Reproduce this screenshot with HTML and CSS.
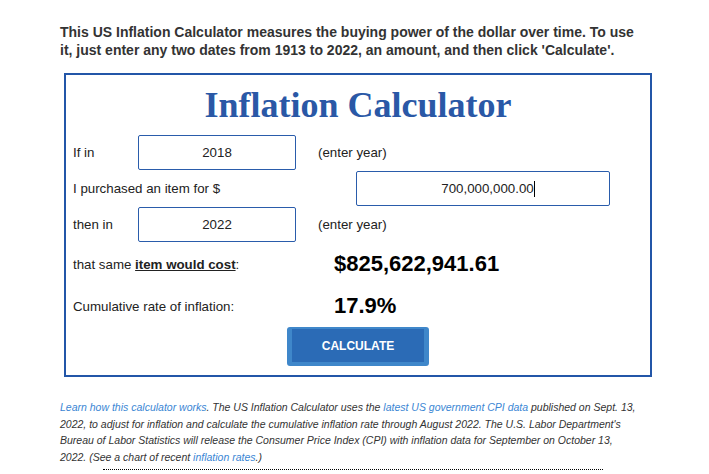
FILE: index.html
```html
<!DOCTYPE html>
<html lang="en">
<head>
    <meta charset="UTF-8">
    <meta name="viewport" content="width=device-width, initial-scale=1.0">
    <title>US Inflation Calculator</title>
    <link rel="stylesheet" href="styles.css">
</head>
<body>
    <div class="page">
        <p class="intro">This US Inflation Calculator measures the buying power of the dollar over time. To use it, just enter any two dates from 1913 to 2022, an amount, and then click 'Calculate'.</p>

        <div class="calculator">
            <h1 class="calc-title">Inflation Calculator</h1>

            <div class="calc-row">
                <span class="label label-short">If in</span>
                <input type="text" class="field field-year" value="2018">
                <span class="hint">(enter year)</span>
            </div>

            <div class="calc-row">
                <span class="label label-long">I purchased an item for $</span>
                <div class="field field-amount">700,000,000.00<span class="caret"></span></div>
            </div>

            <div class="calc-row">
                <span class="label label-short">then in</span>
                <input type="text" class="field field-year" value="2022">
                <span class="hint">(enter year)</span>
            </div>

            <div class="result-row">
                <span class="label label-result">that same <a href="#" class="cost-link">item would cost</a>:</span>
                <span class="result">$825,622,941.61</span>
            </div>

            <div class="result-row">
                <span class="label label-result">Cumulative rate of inflation:</span>
                <span class="result">17.9%</span>
            </div>

            <div class="actions">
                <button class="calc-button">CALCULATE</button>
            </div>
        </div>

        <p class="note"><a href="#">Learn how this calculator works</a>. The US Inflation Calculator uses the <a href="#">latest US government CPI data</a> published on Sept. 13, 2022, to adjust for inflation and calculate the cumulative inflation rate through August 2022. The U.S. Labor Department's Bureau of Labor Statistics will release the Consumer Price Index (CPI) with inflation data for September on October 13, 2022. (See a chart of recent <a href="#">inflation rates</a>.)</p>

        <hr class="divider">
    </div>
</body>
</html>
```

FILE: styles.css
```css
body {
    margin: 0;
    background-color: #fff;
    font-family: 'Liberation Sans', Arial, sans-serif;
    color: #333;
}

.page {
    width: 592px;
    margin-left: 60px;
    padding-top: 23px;
}

.intro {
    margin: 0;
    width: 580px;
    font-size: 14px;
    font-weight: bold;
    line-height: 18px;
}

.calculator {
    margin: 14px 0 0 4px;
    width: 584px;
    border: 2px solid #2356a8;
    padding: 0 0 9px;
}

.calc-title {
    margin: 10px 0 10px;
    font-family: 'Liberation Serif', 'Times New Roman', serif;
    font-size: 36px;
    line-height: 40px;
    text-align: center;
    color: #2a58a6;
}

.calc-row {
    display: flex;
    align-items: center;
    height: 35px;
    margin-bottom: 1px;
    padding-left: 7px;
}

.label {
    font-size: 13.3px;
    color: #222;
}

.label-short {
    width: 65px;
}

.label-long {
    width: 283px;
}

.label-result {
    width: 261px;
}

.field {
    box-sizing: border-box;
    height: 35px;
    border: 1px solid #2a5cab;
    border-radius: 2px;
    background: #fff;
    font-family: 'Liberation Sans', Arial, sans-serif;
    font-size: 13.3px;
    color: #222;
    text-align: center;
    padding: 0;
    margin: 0;
}

.field-year {
    width: 158px;
    margin-right: 22px;
}

.field-amount {
    width: 254px;
    display: flex;
    align-items: center;
    justify-content: center;
    padding-left: 10px;
}

.caret {
    display: inline-block;
    width: 1px;
    height: 16px;
    background: #000;
}

.hint {
    font-size: 13.3px;
    color: #222;
}

.result-row {
    display: flex;
    align-items: center;
    height: 42px;
    padding-left: 7px;
}

.cost-link {
    color: #222;
    font-weight: bold;
}

.result {
    font-size: 22px;
    font-weight: bold;
    color: #000;
}

.actions {
    display: flex;
    justify-content: center;
}

.calc-button {
    width: 142px;
    height: 39px;
    border: 5px solid #3f87ca;
    border-top-width: 2px;
    border-bottom-width: 4px;
    border-radius: 3px;
    background-color: #2b6bb6;
    color: #fff;
    font-family: 'Liberation Sans', Arial, sans-serif;
    font-size: 12px;
    font-weight: bold;
    padding-top: 2px;
}

.note {
    margin: 22px 0 0;
    width: 580px;
    font-size: 10.5px;
    font-style: italic;
    line-height: 16.5px;
    color: #333;
}

.note a {
    color: #3a86d4;
    text-decoration: none;
}

.divider {
    width: 500px;
    margin: 4px 0 0 43px;
    border: 0;
    border-top: 1px dotted #000;
}
```
